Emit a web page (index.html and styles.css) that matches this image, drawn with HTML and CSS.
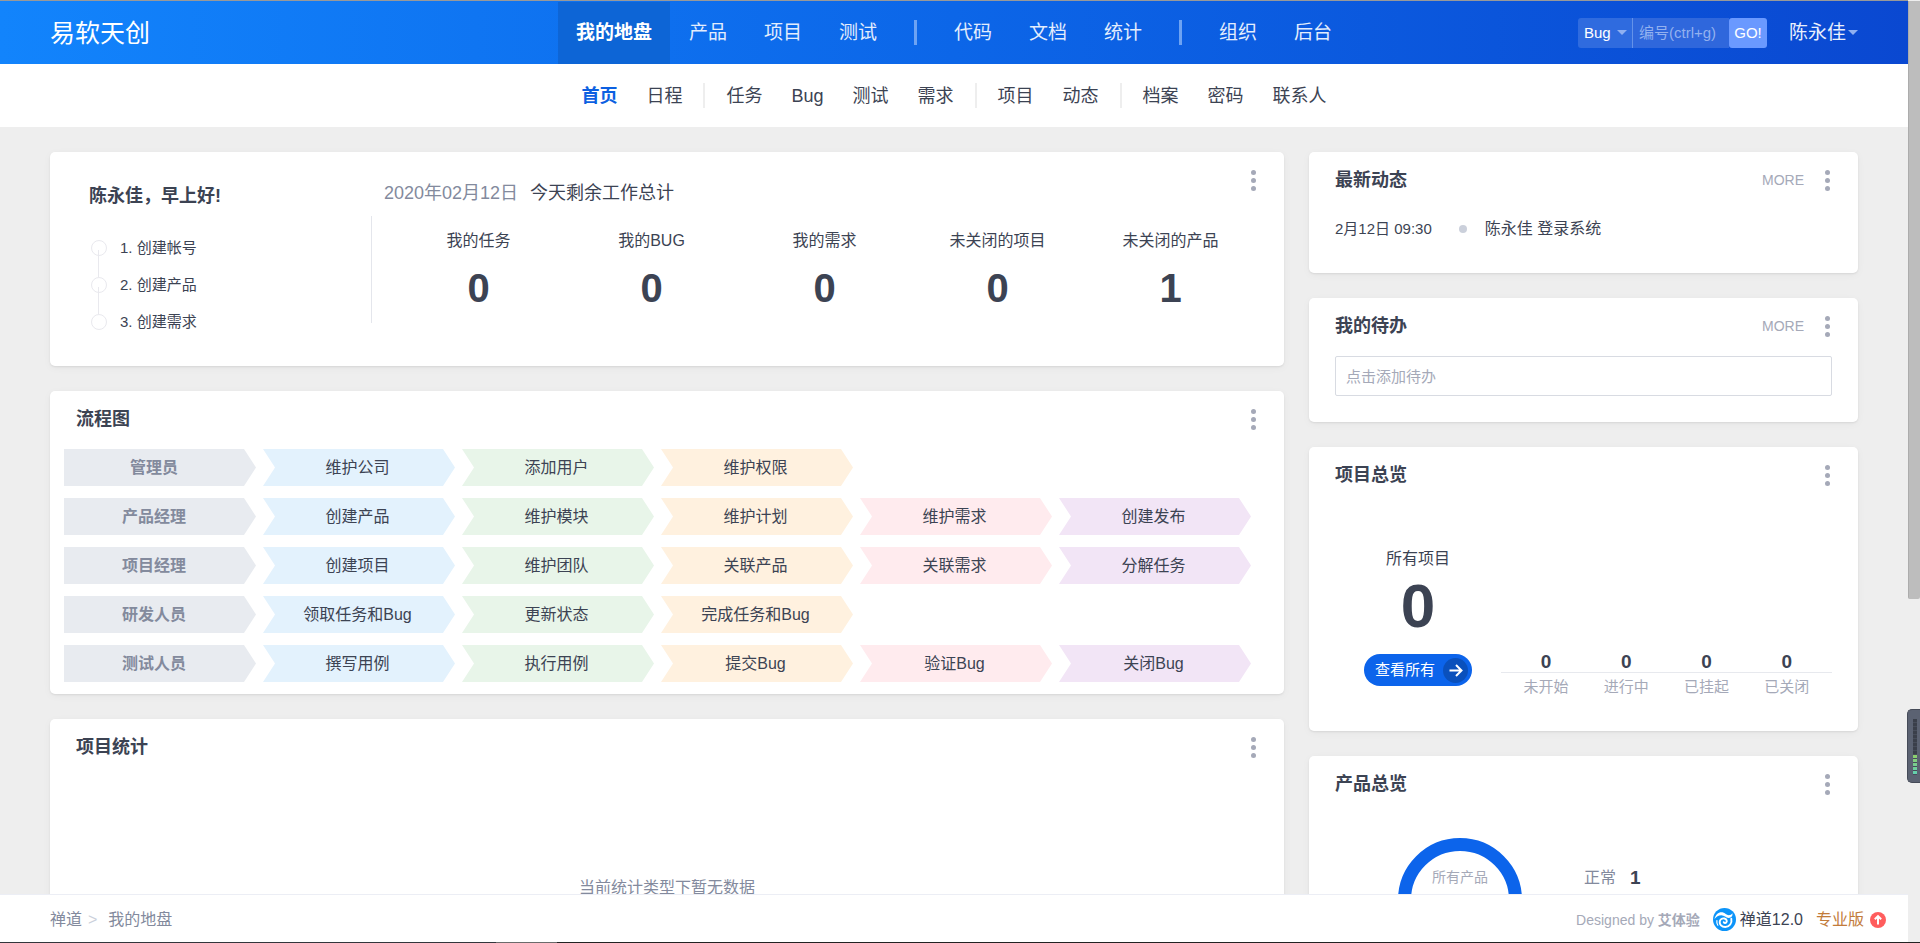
FILE: index.html
```html
<!DOCTYPE html>
<html lang="zh-CN">
<head>
<meta charset="utf-8">
<title>我的地盘 - 禅道</title>
<link rel="stylesheet" href="styles.css">
</head>
<body>
<header class="topbar">
  <h1 class="company">易软天创</h1>
  <nav class="mainnav" aria-label="主导航">
    <a class="active" href="#">我的地盘</a>
    <a href="#">产品</a>
    <a href="#">项目</a>
    <a href="#">测试</a>
    <span class="divider"></span>
    <a href="#">代码</a>
    <a href="#">文档</a>
    <a href="#">统计</a>
    <span class="divider"></span>
    <a href="#">组织</a>
    <a href="#">后台</a>
  </nav>
  <div class="tools">
    <form class="search">
      <span class="select-wrap">
        <select aria-label="搜索类型"><option>Bug</option></select>
        <i class="caret"></i>
      </span>
      <input type="text" aria-label="编号" placeholder="编号(ctrl+g)">
      <button type="button">GO!</button>
    </form>
    <a class="user" href="#">陈永佳<i class="caret"></i></a>
  </div>
</header>

<nav class="subnav" aria-label="子导航">
  <a class="active" href="#">首页</a>
  <a href="#">日程</a>
  <span class="divider"></span>
  <a href="#">任务</a>
  <a href="#">Bug</a>
  <a href="#">测试</a>
  <a href="#">需求</a>
  <span class="divider"></span>
  <a href="#">项目</a>
  <a href="#">动态</a>
  <span class="divider"></span>
  <a href="#">档案</a>
  <a href="#">密码</a>
  <a href="#">联系人</a>
</nav>

<main class="dashboard">
  <div class="column">
    <section class="card welcome">
      <div class="greeting">
        <h2>陈永佳，早上好!</h2>
        <ol class="steps">
          <li><a href="#">1. 创建帐号</a></li>
          <li><a href="#">2. 创建产品</a></li>
          <li><a href="#">3. 创建需求</a></li>
        </ol>
      </div>
      <div class="summary">
        <div class="summary-head">
          <p><span class="date">2020年02月12日</span><span>今天剩余工作总计</span></p>
          <button class="kebab" type="button" aria-label="更多"><i></i><i></i><i></i></button>
        </div>
        <div class="counts">
          <div><span>我的任务</span><b>0</b></div>
          <div><span>我的BUG</span><b>0</b></div>
          <div><span>我的需求</span><b>0</b></div>
          <div><span>未关闭的项目</span><b>0</b></div>
          <div><span>未关闭的产品</span><b>1</b></div>
        </div>
      </div>
    </section>

    <section class="card">
      <div class="card-head">
        <h2>流程图</h2>
        <button class="kebab" type="button" aria-label="更多"><i></i><i></i><i></i></button>
      </div>
      <div class="flow">
        <div class="flow-row">
          <span class="role">管理员</span>
          <a href="#" class="blue">维护公司</a><a href="#" class="green">添加用户</a><a href="#" class="orange">维护权限</a>
        </div>
        <div class="flow-row">
          <span class="role">产品经理</span>
          <a href="#" class="blue">创建产品</a><a href="#" class="green">维护模块</a><a href="#" class="orange">维护计划</a><a href="#" class="red">维护需求</a><a href="#" class="purple">创建发布</a>
        </div>
        <div class="flow-row">
          <span class="role">项目经理</span>
          <a href="#" class="blue">创建项目</a><a href="#" class="green">维护团队</a><a href="#" class="orange">关联产品</a><a href="#" class="red">关联需求</a><a href="#" class="purple">分解任务</a>
        </div>
        <div class="flow-row">
          <span class="role">研发人员</span>
          <a href="#" class="blue">领取任务和Bug</a><a href="#" class="green">更新状态</a><a href="#" class="orange">完成任务和Bug</a>
        </div>
        <div class="flow-row">
          <span class="role">测试人员</span>
          <a href="#" class="blue">撰写用例</a><a href="#" class="green">执行用例</a><a href="#" class="orange">提交Bug</a><a href="#" class="red">验证Bug</a><a href="#" class="purple">关闭Bug</a>
        </div>
      </div>
    </section>

    <section class="card">
      <div class="card-head">
        <h2>项目统计</h2>
        <button class="kebab" type="button" aria-label="更多"><i></i><i></i><i></i></button>
      </div>
      <p class="empty">当前统计类型下暂无数据</p>
    </section>
  </div>

  <div class="column">
    <section class="card">
      <div class="card-head">
        <h2>最新动态</h2>
        <a class="more" href="#">MORE</a>
        <button class="kebab" type="button" aria-label="更多"><i></i><i></i><i></i></button>
      </div>
      <ul class="timeline">
        <li><time>2月12日 09:30</time><i class="dot"></i><span>陈永佳 登录系统</span></li>
      </ul>
    </section>

    <section class="card">
      <div class="card-head">
        <h2>我的待办</h2>
        <a class="more" href="#">MORE</a>
        <button class="kebab" type="button" aria-label="更多"><i></i><i></i><i></i></button>
      </div>
      <div class="todo"><input type="text" aria-label="添加待办" placeholder="点击添加待办"></div>
    </section>

    <section class="card">
      <div class="card-head">
        <h2>项目总览</h2>
        <button class="kebab" type="button" aria-label="更多"><i></i><i></i><i></i></button>
      </div>
      <div class="projects">
        <div class="total">
          <span>所有项目</span>
          <b>0</b>
          <a class="pill" href="#">查看所有
            <svg width="25" height="25" viewBox="0 0 25 25" aria-hidden="true"><circle cx="12.500" cy="12.500" r="12.500" fill="#0a50bc"/><path d="M6.500 12.500h11.500M13 7l5.500 5.500L13 18" fill="none" stroke="#fff" stroke-width="2"/></svg>
          </a>
        </div>
        <div class="states">
          <div><b>0</b><span>未开始</span></div>
          <div><b>0</b><span>进行中</span></div>
          <div><b>0</b><span>已挂起</span></div>
          <div><b>0</b><span>已关闭</span></div>
        </div>
      </div>
    </section>

    <section class="card">
      <div class="card-head">
        <h2>产品总览</h2>
        <button class="kebab" type="button" aria-label="更多"><i></i><i></i><i></i></button>
      </div>
      <div class="products">
        <div class="donut">所有产品</div>
        <p class="legend"><span>正常</span><b>1</b></p>
      </div>
    </section>
  </div>
</main>

<footer class="footer">
  <nav class="crumbs" aria-label="当前位置"><a href="#">禅道</a><span>&gt;</span><a href="#">我的地盘</a></nav>
  <div class="about">
    <span class="credit">Designed by <b>艾体验</b></span>
    <a class="version" href="#">
      <svg width="23" height="23" viewBox="0 0 23 23" aria-hidden="true"><circle cx="11.500" cy="11.500" r="11.500" fill="#0c94f9"/><path d="M1.500 11C2.600 6.200 6 3.600 9.500 4.300c3 .6 3.600 2.900 6.300 3 1.700 0 2.900-.7 3.600-2 .6 2.600-1 4.500-3.600 4.600-3 .1-4.300-2.600-7.500-2.600-2.800 0-5 1.500-6.800 3.700z" fill="#fff"/><path d="M18.300 10.800c1 4.300-1.800 8.200-6 8.200-3.700 0-6-2.600-5.600-5.300.3-2.400 2.600-3.700 4.700-3.200 2.200.5 3 2.600 1.900 3.900-.8 1-2.300.8-2.600-.3" fill="none" stroke="#fff" stroke-width="1.900" stroke-linecap="round"/><path d="M3.900 12.500c-.3 1.800 0 3.300.9 4.700" fill="none" stroke="#fff" stroke-width="1.200" stroke-linecap="round"/></svg>
      禅道12.0
    </a>
    <a class="pro" href="#">专业版
      <svg width="16" height="16" viewBox="0 0 16 16" aria-hidden="true"><circle cx="8" cy="8" r="8" fill="#ff5d5d"/><path d="M8 12.500V4.500M4.800 7.300L8 4.200l3.200 3.100" fill="none" stroke="#fff" stroke-width="2"/></svg>
    </a>
  </div>
</footer>

<div class="scrollbar"><div class="thumb"></div></div>
<div class="meter"><div class="bars"></div></div>
<div class="edge"></div>
</body>
</html>
```

FILE: styles.css
```css
* { box-sizing: border-box; }

html { scrollbar-width: none; }

body {
  margin: 0;
  padding-right: 12px;
  background: #eeeeee;
  color: #3c4353;
  font: 16px/24px "Liberation Sans", "Noto Sans CJK SC", sans-serif;
}

h1, h2, p, ul, ol { margin: 0; padding: 0; }
ul, ol { list-style: none; }
a { color: inherit; text-decoration: none; }
h2 { font-size: 18px; line-height: 24px; font-weight: 700; }
button, input, select { margin: 0; padding: 0; border: 0; font: inherit; color: inherit; }

/* Top bar */
.topbar {
  display: grid;
  grid-template-columns: 1fr auto 1fr;
  align-items: center;
  height: 64px;
  padding: 0 50px;
  background: linear-gradient(90deg, #1284fc, #0c66e8 50%, #0a48d1);
  border-top: 1px solid #999999;
  color: #fff;
}
.company { font-size: 25px; line-height: 36px; font-weight: 400; }
.mainnav, .subnav { display: flex; align-items: center; justify-content: center; gap: 1px; }
.mainnav a { padding: 0 18px; font-size: 19px; line-height: 62px; color: #e3edfd; }
.mainnav .active { background: #0d65d6; color: #fff; font-weight: 700; }
.mainnav .divider { width: 3px; height: 25px; margin: 0 18px; background: #6da3f3; }
.tools { display: flex; align-items: center; justify-content: flex-end; gap: 22px; }
.search { display: flex; height: 30px; font-size: 15px; line-height: 30px; }
.select-wrap {
  display: flex;
  align-items: center;
  width: 55px;
  padding: 0 5px 0 6px;
  background: #2f6bdf;
  border-right: 1px solid #6492e9;
  border-radius: 3px 0 0 3px;
}
.select-wrap select { flex: 1; min-width: 0; background: transparent; color: #fff; appearance: none; }
.caret { display: inline-block; border: 5px solid transparent; border-top-color: #8fb0f1; border-bottom: 0; }
.search input { width: 96px; padding: 0 6px; background: #2f67dc; }
.search input::placeholder { color: #93b1ef; opacity: 1; }
.search button { width: 38px; background: #6a99ff; color: #fff; border-radius: 3px; }
.user { display: flex; align-items: center; gap: 2px; font-size: 19px; color: #e9effc; }

/* Second level navigation */
.subnav { height: 63px; background: #fff; font-size: 18px; }
.subnav a { padding: 0 14px; }
.subnav .active { color: #0c60e1; font-weight: 700; }
.subnav .divider { width: 2px; height: 25px; margin: 0 6px; background: #eeeeee; }

/* Dashboard */
.dashboard {
  display: grid;
  grid-template-columns: minmax(0, 1234fr) minmax(0, 549fr);
  gap: 25px;
  padding: 25px 50px 75px;
}
.column { display: flex; flex-direction: column; gap: 25px; }
.card { background: #fff; border-radius: 5px; box-shadow: 0 1px 2px rgba(0, 0, 0, .08), 0 2px 8px rgba(0, 0, 0, .04); }
.card-head { display: flex; align-items: center; gap: 11px; padding: 16px 19px 16px 26px; }
.card-head h2 { flex: 1; }
.more { font-size: 14px; color: #a5a9b8; }
.kebab {
  display: flex;
  flex-direction: column;
  align-items: center;
  justify-content: center;
  gap: 3px;
  width: 24px;
  height: 24px;
  background: transparent;
}
.kebab i { width: 5px; height: 5px; border-radius: 50%; background: #a5a9b8; }

/* Welcome */
.welcome { display: flex; align-items: flex-start; padding: 16px 19px 26px 39px; }
.greeting { width: 282px; padding-top: 16px; }
.steps { margin-top: 21px; font-size: 15px; }
.steps li { position: relative; padding-left: 31px; line-height: 37px; }
.steps li::before {
  content: "";
  position: absolute;
  left: 2px;
  top: 11px;
  width: 14px;
  height: 14px;
  border: 1px solid #e9e9ee;
  border-radius: 50%;
}
.steps li + li::after {
  content: "";
  position: absolute;
  left: 9px;
  top: -16px;
  width: 1px;
  height: 27px;
  background: #e9e9ee;
}
.summary { flex: 1; }
.summary-head { display: flex; align-items: flex-start; justify-content: space-between; padding-left: 13px; font-size: 18px; }
.summary-head p { display: flex; gap: 12px; padding-top: 13px; }
.date { color: #838a9d; }
.counts {
  display: grid;
  grid-template-columns: repeat(5, 1fr);
  min-height: 107px;
  margin: 11px 8px 0 0;
  padding: 13px 0 0 20px;
  border-left: 1px solid #e4e6ec;
  text-align: center;
}
.counts span, .counts b { display: block; }
.counts b { margin-top: 11px; font-size: 40px; line-height: 48px; }

/* Flow chart */
.flow { display: flex; flex-direction: column; gap: 12px; padding: 2px 33px 12px 14px; }
.flow-row { display: grid; grid-template-columns: repeat(6, minmax(0, 1fr)); gap: 7px; text-align: center; line-height: 37px; }
.flow-row a { padding-right: 3px; clip-path: polygon(0 0, calc(100% - 12px) 0, 100% 50%, calc(100% - 12px) 100%, 0 100%, 12px 50%); }
.role {
  padding-right: 12px;
  background: #e8ebf0;
  color: #838a9d;
  font-weight: 700;
  clip-path: polygon(0 0, calc(100% - 12px) 0, 100% 50%, calc(100% - 12px) 100%, 0 100%);
}
.blue { background: #e3f2fd; }
.green { background: #e8f5e9; }
.orange { background: #fff1df; }
.red { background: #ffebee; }
.purple { background: #f2e5f6; }

.empty { padding: 101px 20px 120px; text-align: center; color: #838a9d; }

/* Right column */
.timeline { padding: 9px 26px 32px; }
.timeline li { display: flex; align-items: center; }
.timeline time { font-size: 15px; }
.dot { width: 8px; height: 8px; margin: 0 18px 0 27px; border-radius: 50%; background: #cbd0db; }
.todo { padding: 2px 26px 26px; }
.todo input { display: block; width: 100%; height: 40px; padding: 0 10px; border: 1px solid #d8dbe2; border-radius: 2px; font-size: 15px; }
.todo input::placeholder { color: #a5a9b8; opacity: 1; }

.projects { display: flex; align-items: flex-end; gap: 29px; padding: 44px 26px 32px 55px; }
.total { display: flex; flex-direction: column; align-items: center; padding-bottom: 13px; }
.total b { margin: 4px 0 17px; font-size: 62px; line-height: 62px; }
.pill {
  display: flex;
  align-items: center;
  justify-content: space-between;
  width: 108px;
  height: 32px;
  padding: 0 4px 0 11px;
  border-radius: 16px;
  background: #0c64eb;
  color: #fff;
  font-size: 15px;
}
.states { position: relative; display: grid; flex: 1; grid-template-columns: repeat(4, 1fr); padding: 0 5px; text-align: center; }
.states::before { content: ""; position: absolute; left: 0; right: 0; top: 21px; height: 1px; background: #e7e9ee; }
.states b, .states span { display: block; }
.states b { font-size: 19px; line-height: 22px; }
.states span { margin-top: 2px; font-size: 15px; line-height: 24px; color: #a5a9b8; }

.products { display: flex; gap: 62px; padding: 26px 26px 40px 89px; }
.donut {
  width: 124px;
  height: 124px;
  padding-top: 14px;
  border: 13px solid #0c64eb;
  border-radius: 50%;
  font-size: 14px;
  text-align: center;
  color: #a5a9b8;
}
.legend { display: flex; gap: 14px; padding-top: 28px; }
.legend span { color: #838a9d; }
.legend b { font-size: 19px; }

/* Footer */
.footer {
  position: fixed;
  left: 0;
  right: 12px;
  bottom: 0;
  display: flex;
  align-items: center;
  justify-content: space-between;
  height: 49px;
  padding: 1px 22px 0 50px;
  background: #fff;
  border-top: 1px solid #eceef5;
}
.crumbs { display: flex; gap: 6px; color: #838a9d; }
.crumbs span { padding-right: 5px; color: #cbd0db; }
.about { display: flex; align-items: center; gap: 13px; }
.credit { font-size: 14px; color: #a5a9b8; }
.credit b { font-weight: 700; }
.version, .pro { display: flex; align-items: center; gap: 4px; }
.pro { gap: 6px; color: #c27b3a; }

/* Scroll track, level meter and screen edge */
.scrollbar { position: fixed; right: 0; top: 1px; bottom: 1px; width: 12px; background: #eeeeee; }
.thumb { height: 63.5%; background: #bdbdbd; border-left: 1px solid #acacac; border-radius: 0 0 2px 2px; }
.meter {
  position: fixed;
  right: 0;
  top: 709px;
  width: 13px;
  height: 74px;
  padding: 9px 3px 0 5px;
  border: 1px solid #454b58;
  border-right: 0;
  border-radius: 5px 0 0 5px;
  background: #5b6272;
}
.bars {
  height: 56px;
  background:
    repeating-linear-gradient(transparent 0 3px, #474d5a 3px 4px),
    linear-gradient(#3a3f4a 0 36px, #8fcf6b 36px, #5fd0b4);
}
.edge {
  position: fixed;
  left: 0;
  right: 0;
  bottom: 0;
  height: 1px;
  background: linear-gradient(90deg, #33363c 0 496px, #6b6b6b 496px 557px, #222222 557px);
}
```
